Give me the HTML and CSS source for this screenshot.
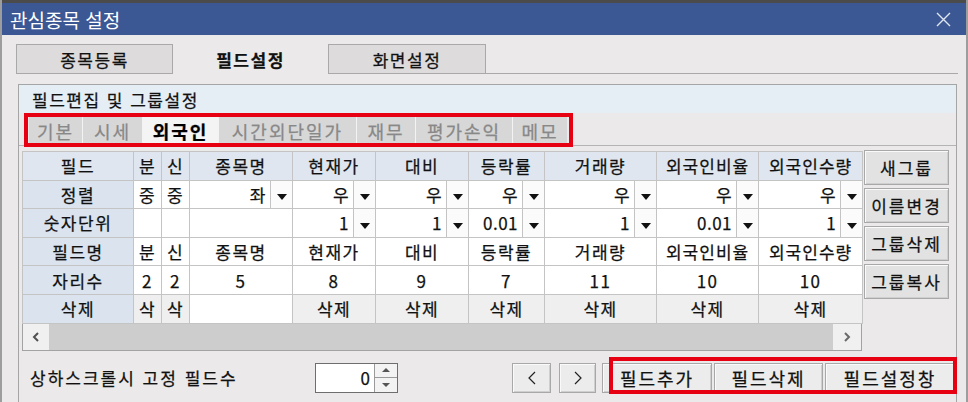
FILE: index.html
```html
<!DOCTYPE html>
<html lang="ko">
<head>
    <meta charset="UTF-8">
    <title>관심종목 설정</title>
    <link rel="stylesheet" href="styles.css">
</head>
<body>
<div class="window">
    <div class="titlebar">
        <span class="title">관심종목 설정</span>
        <svg class="close" viewBox="0 0 15 15"><path d="M1 1 L14 14 M14 1 L1 14" stroke="#dfe6f2" stroke-width="1.4" fill="none"/></svg>
    </div>

    <div class="content">
        <div class="tabs">
            <div class="tab t1">종목등록</div>
            <div class="tab active">필드설정</div>
            <div class="tab t3">화면설정</div>
            <div class="tab-fill"></div>
        </div>

        <div class="panel">
            <div class="panel-head">필드편집 및 그룹설정</div>

            <div class="subbar">
                <div class="subtabs marked">
                    <div class="subtab" style="width:53px">기본</div>
                    <div class="subtab" style="width:59px">시세</div>
                    <div class="subtab on" style="width:75px">외국인</div>
                    <div class="subtab" style="width:137px">시간외단일가</div>
                    <div class="subtab" style="width:58px">재무</div>
                    <div class="subtab" style="width:96px">평가손익</div>
                    <div class="subtab" style="width:54px">메모</div>
                </div>
            </div>

            <div class="grid-area">
                <div class="grid-wrap">
                    <table class="grid">
                        <colgroup>
                            <col style="width:111px">
                            <col style="width:28px">
                            <col style="width:28px">
                            <col style="width:81px"><col style="width:22px">
                            <col style="width:61px"><col style="width:22px">
                            <col style="width:71px"><col style="width:22px">
                            <col style="width:54px"><col style="width:22px">
                            <col style="width:90px"><col style="width:22px">
                            <col style="width:80px"><col style="width:22px">
                            <col style="width:82px"><col style="width:22px">
                        </colgroup>
                        <tr class="head">
                            <th class="lbl">필드</th>
                            <th>분</th>
                            <th>신</th>
                            <th colspan="2">종목명</th>
                            <th colspan="2">현재가</th>
                            <th colspan="2">대비</th>
                            <th colspan="2">등락률</th>
                            <th colspan="2">거래량</th>
                            <th colspan="2" class="tight">외국인비율</th>
                            <th colspan="2" class="tight">외국인수량</th>
                        </tr>
                        <tr>
                            <td class="lbl">정렬</td>
                            <td>중</td>
                            <td>중</td>
                            <td class="val">좌</td><td class="dd"><span class="tri"></span></td>
                            <td class="val">우</td><td class="dd"><span class="tri"></span></td>
                            <td class="val">우</td><td class="dd"><span class="tri"></span></td>
                            <td class="val">우</td><td class="dd"><span class="tri"></span></td>
                            <td class="val">우</td><td class="dd"><span class="tri"></span></td>
                            <td class="val">우</td><td class="dd"><span class="tri"></span></td>
                            <td class="val">우</td><td class="dd"><span class="tri"></span></td>
                        </tr>
                        <tr>
                            <td class="lbl">숫자단위</td>
                            <td></td>
                            <td></td>
                            <td colspan="2"></td>
                            <td class="val">1</td><td class="dd"><span class="tri"></span></td>
                            <td class="val">1</td><td class="dd"><span class="tri"></span></td>
                            <td class="val">0.01</td><td class="dd"><span class="tri"></span></td>
                            <td class="val">1</td><td class="dd"><span class="tri"></span></td>
                            <td class="val">0.01</td><td class="dd"><span class="tri"></span></td>
                            <td class="val">1</td><td class="dd"><span class="tri"></span></td>
                        </tr>
                        <tr>
                            <td class="lbl">필드명</td>
                            <td>분</td>
                            <td>신</td>
                            <td colspan="2">종목명</td>
                            <td colspan="2">현재가</td>
                            <td colspan="2">대비</td>
                            <td colspan="2">등락률</td>
                            <td colspan="2">거래량</td>
                            <td colspan="2" class="tight">외국인비율</td>
                            <td colspan="2" class="tight">외국인수량</td>
                        </tr>
                        <tr>
                            <td class="lbl">자리수</td>
                            <td>2</td>
                            <td>2</td>
                            <td colspan="2">5</td>
                            <td colspan="2">8</td>
                            <td colspan="2">9</td>
                            <td colspan="2">7</td>
                            <td colspan="2">11</td>
                            <td colspan="2">10</td>
                            <td colspan="2">10</td>
                        </tr>
                        <tr class="del">
                            <td class="lbl">삭제</td>
                            <td>삭</td>
                            <td>삭</td>
                            <td colspan="2" class="blank"></td>
                            <td colspan="2">삭제</td>
                            <td colspan="2">삭제</td>
                            <td colspan="2">삭제</td>
                            <td colspan="2">삭제</td>
                            <td colspan="2">삭제</td>
                            <td colspan="2">삭제</td>
                        </tr>
                    </table>
                    <div class="hscroll">
                        <div class="sbtn left">
                            <svg viewBox="0 0 8 10" width="8" height="10"><polyline points="6,1 2,5 6,9" fill="none" stroke="#505050" stroke-width="2"/></svg>
                        </div>
                        <div class="track"></div>
                        <div class="sbtn right">
                            <svg viewBox="0 0 8 10" width="8" height="10"><polyline points="2,1 6,5 2,9" fill="none" stroke="#6a6a6a" stroke-width="2"/></svg>
                        </div>
                    </div>
                </div>

                <div class="side-btns">
                    <button class="btn">새그룹</button>
                    <button class="btn">이름변경</button>
                    <button class="btn">그룹삭제</button>
                    <button class="btn">그룹복사</button>
                </div>
            </div>

            <div class="bottom">
                <div class="fix-label">상하스크롤시 고정 필드수</div>
                <div class="spin">
                    <div class="spin-val">0</div>
                    <div class="spin-arrows">
                        <div class="half"><span class="up"></span></div>
                        <div class="half"><span class="down"></span></div>
                    </div>
                </div>
                <button class="btn nav">
                    <svg viewBox="0 0 10 14" width="10" height="14"><polyline points="8,1 2,7 8,13" fill="none" stroke="#222" stroke-width="1.2"/></svg>
                </button>
                <button class="btn nav next">
                    <svg viewBox="0 0 10 14" width="10" height="14"><polyline points="2,1 8,7 2,13" fill="none" stroke="#222" stroke-width="1.2"/></svg>
                </button>
                <div class="field-btns marked">
                    <button class="btn fb" style="width:110px">필드추가</button>
                    <button class="btn fb" style="width:109px">필드삭제</button>
                    <button class="btn fb" style="width:130px">필드설정창</button>
                </div>
            </div>
        </div>
    </div>
</div>
</body>
</html>
```

FILE: styles.css
```css
* {
    box-sizing: border-box;
}
body {
    margin: 0;
    width: 968px;
    height: 402px;
    overflow: hidden;
    background: #ebe9e9;
    font-family: "Noto Sans CJK KR", "Noto Sans", sans-serif;
    color: #111;
    -webkit-text-stroke: 0.25px currentColor;
}
.window {
    height: 402px;
    border-left: 2px solid #9d9d9d;
    border-right: 2px solid #9d9d9d;
}
.titlebar {
    height: 35px;
    background: #3b5895;
    border-top: 3px solid #4b4b4b;
    display: flex;
    align-items: center;
    justify-content: space-between;
    padding: 0 15px 0 8px;
    color: #fff;
}
.title {
    font-size: 19px;
    line-height: 1;
    -webkit-text-stroke: 0;
}
.close {
    width: 15px;
    height: 15px;
}
.content {
    padding: 9px 8px 0 14px;
}

/* main tabs */
.tabs {
    display: flex;
    height: 30px;
}
.tab {
    font-size: 17px;
    letter-spacing: 1.5px;
    display: flex;
    align-items: center;
    justify-content: center;
    line-height: 1;
}
.tab.t1,
.tab.t3 {
    background: #dddbdb;
    border: 1px solid #a9a9a9;
}
.tab.t1 {
    width: 157px;
}
.tab.active {
    width: 155px;
    font-weight: bold;
}
.tab.t3 {
    width: 158px;
}
.tab-fill {
    flex: 1;
    border-bottom: 1px solid #a9a9a9;
}

/* panel */
.panel {
    margin: 10px 1px 0 2px;
    height: 330px;
    border: 1px solid #a5a5a5;
}
.panel-head {
    height: 28px;
    background: #e5edf5;
    padding-left: 13px;
    display: flex;
    align-items: center;
    font-size: 17px;
    letter-spacing: 1.5px;
    line-height: 1;
}
.subbar {
    height: 33px;
    border-bottom: 1px solid #b4b4b4;
    padding: 4px 0 0 10px;
}
.subtabs {
    display: flex;
    gap: 1px;
    height: 27px;
    width: 538px;
    background: #f3f3f3;
}
.subtab {
    background: #d7d7d7;
    color: #888;
    font-size: 18px;
    letter-spacing: 2px;
    display: flex;
    align-items: center;
    justify-content: center;
    line-height: 1;
}
.subtab.on {
    background: #f4f4f4;
    color: #000;
    font-weight: bold;
}
.marked {
    position: relative;
}
.subtabs.marked::after {
    content: "";
    position: absolute;
    top: -4px;
    right: -6px;
    bottom: -3px;
    left: -5px;
    border: 4px solid #e60012;
}

/* grid */
.grid-area {
    display: flex;
    align-items: flex-start;
    gap: 2px;
    padding: 5px 0 0 3px;
}
.grid-wrap {
    width: 840px;
}
.grid {
    width: 840px;
    table-layout: fixed;
    border-collapse: collapse;
    border: 1px solid #a3a3a3;
    background: #fff;
}
.grid tr {
    height: 28.6px;
}
.grid th,
.grid td {
    padding: 0;
    border: 1px solid #c4c4c4;
    font-size: 17px;
    font-weight: normal;
    letter-spacing: 1.5px;
    line-height: 1;
    text-align: center;
    white-space: nowrap;
    overflow: hidden;
}
.grid .tight {
    letter-spacing: 1px;
}
.grid tr.head th {
    background: #dfe6ef;
}
.grid .lbl {
    background: #dae3ee;
}
.grid td.val {
    text-align: right;
    padding-right: 4px;
    letter-spacing: 0.5px;
}
.grid td.dd {
    background: #fbfbfb;
}
.tri {
    display: inline-block;
    vertical-align: middle;
    border-left: 5px solid transparent;
    border-right: 5px solid transparent;
    border-top: 6px solid #111;
}
.grid tr.del td {
    background: #efefef;
}
.grid tr.del td.lbl {
    background: #dae3ee;
}
.grid tr.del td.blank {
    background: #fff;
}
.hscroll {
    display: flex;
    height: 27px;
    background: #cdcdcd;
    border: 1px solid #a3a3a3;
    border-top: none;
}
.sbtn {
    display: flex;
    align-items: center;
    justify-content: center;
    background: #f0f0f0;
}
.sbtn.left {
    width: 26px;
}
.sbtn.right {
    width: 28px;
}
.track {
    flex: 1;
}

/* buttons */
.btn {
    font-family: inherit;
    font-size: 17px;
    letter-spacing: 2px;
    line-height: 1;
    color: #111;
    background: #e2e2e2;
    border: 1px solid #a8a8a8;
    box-shadow: inset 1px 1px 0 #fafafa, inset -1px -1px 0 #cfcfcf;
    padding: 0;
    cursor: pointer;
}
.side-btns {
    display: flex;
    flex-direction: column;
    gap: 3px;
    width: 85px;
    margin-top: -1px;
}
.side-btns .btn {
    height: 35px;
}

/* bottom controls */
.bottom {
    display: flex;
    align-items: center;
    height: 30px;
    margin-top: 12px;
    padding-left: 11px;
}
.fix-label {
    width: 285px;
    font-size: 17px;
    letter-spacing: 2px;
    line-height: 1;
}
.spin {
    display: flex;
    width: 83px;
    height: 30px;
    border: 1px solid #6e6e6e;
    background: #fff;
}
.spin-val {
    width: 59px;
    border-right: 1px solid #9a9a9a;
    font-size: 17px;
    text-align: right;
    padding-right: 4px;
    line-height: 28px;
}
.spin-arrows {
    flex: 1;
    display: flex;
    flex-direction: column;
    background: #f3f3f3;
}
.half {
    flex: 1;
    display: flex;
    align-items: center;
    justify-content: center;
}
.half + .half {
    border-top: 1px solid #9a9a9a;
}
.up {
    border-left: 4px solid transparent;
    border-right: 4px solid transparent;
    border-bottom: 4px solid #555;
}
.down {
    border-left: 4px solid transparent;
    border-right: 4px solid transparent;
    border-top: 4px solid #555;
}
.btn.nav {
    width: 39px;
    height: 30px;
    margin-left: 114px;
    background: #ececec;
    display: flex;
    align-items: center;
    justify-content: center;
}
.btn.nav.next {
    width: 37px;
    margin-left: 8px;
}
.field-btns {
    display: flex;
    gap: 2px;
    margin-left: 6px;
}
.btn.fb {
    height: 30px;
    background: #ececec;
    font-size: 18px;
    letter-spacing: 2px;
}
.field-btns.marked::after {
    content: "";
    position: absolute;
    top: -6px;
    right: -2px;
    bottom: -1px;
    left: 7px;
    border: 4px solid #e60012;
}
```
